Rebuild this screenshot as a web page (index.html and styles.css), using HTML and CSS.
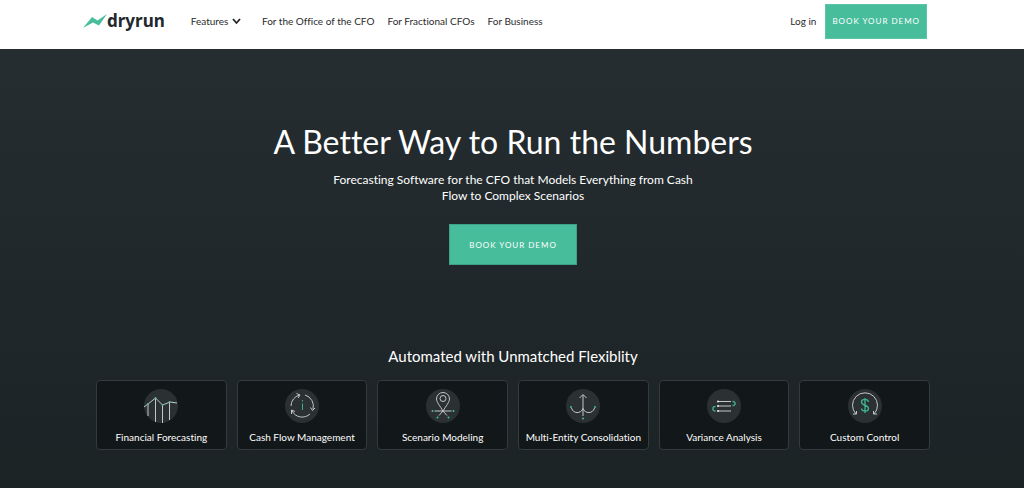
FILE: index.html
```html
<!DOCTYPE html>
<html lang="en">
<head>
    <meta charset="UTF-8">
    <meta name="viewport" content="width=device-width, initial-scale=1.0">
    <title>Dryrun</title>
    <link rel="stylesheet" href="styles.css">
</head>
<body>
    <header class="header">
        <a class="logo" href="#">
            <svg width="24" height="16" viewBox="0 0 24 16" aria-hidden="true">
                <path d="M0 15 L9 4 L14.500 7.500 L24 1 L16 12.500 L10 9.500 Z" fill="#48bd9c"/>
            </svg>
            <span>dryrun</span>
        </a>
        <nav class="nav">
            <a class="features" href="#">Features
                <svg width="9" height="7" viewBox="0 0 9 7" aria-hidden="true">
                    <path d="M1 1 L4.500 5 L8 1" fill="none" stroke="#222" stroke-width="1.8"/>
                </svg>
            </a>
            <a href="#">For the Office of the CFO</a>
            <a href="#">For Fractional CFOs</a>
            <a href="#">For Business</a>
        </nav>
        <a class="login" href="#">Log in</a>
        <button class="btn btn-small" type="button">BOOK YOUR DEMO</button>
    </header>

    <main class="hero">
        <h1>A Better Way to Run the Numbers</h1>
        <p class="lead">Forecasting Software for the CFO that Models Everything from Cash Flow to Complex Scenarios</p>
        <button class="btn btn-large" type="button">BOOK YOUR DEMO</button>

        <h2>Automated with Unmatched Flexiblity</h2>
        <div class="cards">
            <a class="card" href="#">
                <svg class="icon" viewBox="0 0 34 34" aria-hidden="true">
                    <circle class="disc" cx="17" cy="17" r="17"/>
                    <path class="line" d="M0 18 L4 15 L11.500 9 L18.500 16 L26 13 L33 14 M4 15 V27 M11.500 9 V33 M18.500 16 V34 M25.500 13 V31"/>
                    <path class="dots" d="M4 15h0 M11.500 9h0 M18.500 16h0 M25.500 13h0"/>
                </svg>
                <span>Financial Forecasting</span>
            </a>
            <a class="card" href="#">
                <svg class="icon" viewBox="0 0 34 34" aria-hidden="true">
                    <circle class="disc" cx="17" cy="17" r="17"/>
                    <path class="line" d="M6 17 A11.500 11.500 0 0 1 14.500 6 M11.500 4.500 L15 6 L13 9 M20 6 A11.500 11.500 0 0 1 28 20 M25.500 18.500 L27.500 21.500 L30 19 M25 25 A11.500 11.500 0 0 1 7 22 M6.500 25 V21 L10 22.500"/>
                    <path class="green" d="M17.500 14.500 V21 M17.500 11 V12.500"/>
                </svg>
                <span>Cash Flow Management</span>
            </a>
            <a class="card" href="#">
                <svg class="icon" viewBox="0 0 34 34" aria-hidden="true">
                    <circle class="disc" cx="17" cy="17" r="17"/>
                    <path class="line" d="M17 22 C14 17 10.500 13 10.500 10 A6.500 6.500 0 0 1 23.500 10 C23.500 13 20 17 17 22 Z M8.500 22 H25.500 M13 26.500 L17 22 L21 26.500"/>
                    <circle class="line" cx="17" cy="9.500" r="3"/>
                    <path class="dots" d="M6.500 22h0 M27.500 22h0 M11.500 28.500h0 M22.500 28.500h0"/>
                </svg>
                <span>Scenario Modeling</span>
            </a>
            <a class="card" href="#">
                <svg class="icon" viewBox="0 0 34 34" aria-hidden="true">
                    <circle class="disc" cx="17" cy="17" r="17"/>
                    <path class="line" d="M17 27 V6 M13.500 9 L17 5.500 L20.500 9 M5.500 19 C7 25 15 25 17 19.500 C19 25 27 25 28.500 19"/>
                    <path class="dots" d="M5 18h0 M29 18h0 M17 29.500h0"/>
                </svg>
                <span>Multi-Entity Consolidation</span>
            </a>
            <a class="card" href="#">
                <svg class="icon" viewBox="0 0 34 34" aria-hidden="true">
                    <circle class="disc" cx="17" cy="17" r="17"/>
                    <path class="line" d="M11 12.500 H24 M11 17 H24 M11 22 H24"/>
                    <path class="dots white" d="M11 12.500h0 M11 17h0 M11 22h0"/>
                    <path class="green bold" d="M25.500 12.500 C29 12 29 17 25.500 16.500 M8.500 17.500 C5 17 5 22.500 8.500 22"/>
                </svg>
                <span>Variance Analysis</span>
            </a>
            <a class="card" href="#">
                <svg class="icon" viewBox="0 0 34 34" aria-hidden="true">
                    <circle class="disc" cx="17" cy="17" r="17"/>
                    <path class="line" d="M8 25 A12.500 12.500 0 1 1 26 25 M5 25 H8.500 V22 M29 25 H25.500 V22"/>
                    <path class="green bold" d="M20.500 13 C20 9.500 13.500 9.500 13.500 13 C13.500 17 20.500 15.500 20.500 19.500 C20.500 23 14 23 13.500 19.500 M17 9 V24"/>
                </svg>
                <span>Custom Control</span>
            </a>
        </div>
    </main>
</body>
</html>
```
FILE: styles.css
```css
* {
    box-sizing: border-box;
}
body {
    margin: 0;
    min-height: 100vh;
    display: flex;
    flex-direction: column;
    font-family: Lato, "Open Sans", sans-serif;
    font-size: 10px;
    font-variant-ligatures: none;
    color: #fff;
    background-color: #1f2629;
}
a {
    color: inherit;
    text-decoration: none;
}
.header {
    display: flex;
    align-items: center;
    min-height: 49px;
    padding: 0 97px 7px 83px;
    background-color: #fff;
    color: #2b2b2b;
}
.logo {
    display: flex;
    align-items: center;
    margin-right: 26px;
    font-family: "Noto Sans", sans-serif;
    font-size: 17px;
    line-height: 24px;
    font-weight: 700;
    color: #20292d;
}
.nav {
    display: flex;
    gap: 13px;
}
.features {
    margin-right: 8px;
}
.features svg {
    margin-left: 1px;
}
.login {
    margin-left: auto;
    margin-right: 9px;
}
.btn {
    border: 1px solid #3da287;
    background-color: #48bd9c;
    color: #fff;
    font-family: inherit;
    font-size: 8px;
    letter-spacing: 1px;
    cursor: pointer;
}
.btn-small {
    height: 35px;
    padding: 0 6px;
    border-color: #5cc5a8;
}
.btn-large {
    height: 41px;
    padding: 0 19px;
}
.hero {
    flex: 1;
    display: flex;
    flex-direction: column;
    align-items: center;
    padding: 71px 94px 38px 96px;
    text-align: center;
    background: linear-gradient(#252d31, #1c2325);
}
h1 {
    margin: 0;
    font-size: 32px;
    line-height: 44px;
    font-weight: 400;
}
.lead {
    max-width: 370px;
    margin: 8px 0 20px;
    font-size: 12px;
    line-height: 16px;
}
h2 {
    margin: 79px 0 12px;
    font-size: 15px;
    line-height: 24px;
    font-weight: 400;
}
.cards {
    width: 100%;
    display: grid;
    grid-template-columns: repeat(6, 1fr);
    gap: 10px;
}
.card {
    display: flex;
    flex-direction: column;
    align-items: center;
    gap: 6px;
    padding: 8px 0 4px;
    border: 1px solid #333b3e;
    border-radius: 4px;
    background-color: #121719;
    line-height: 16px;
    white-space: nowrap;
}
.icon {
    width: 34px;
    height: 34px;
}
.disc {
    fill: #2b3033;
}
.line, .green, .dots {
    fill: none;
    stroke: #c4c7c8;
    stroke-width: 1;
}
.green {
    stroke: #3fae8e;
}
.bold {
    stroke-width: 1.4;
}
.dots {
    stroke: #48bd9c;
    stroke-width: 2;
    stroke-linecap: round;
}
.white {
    stroke: #eee;
}
```
